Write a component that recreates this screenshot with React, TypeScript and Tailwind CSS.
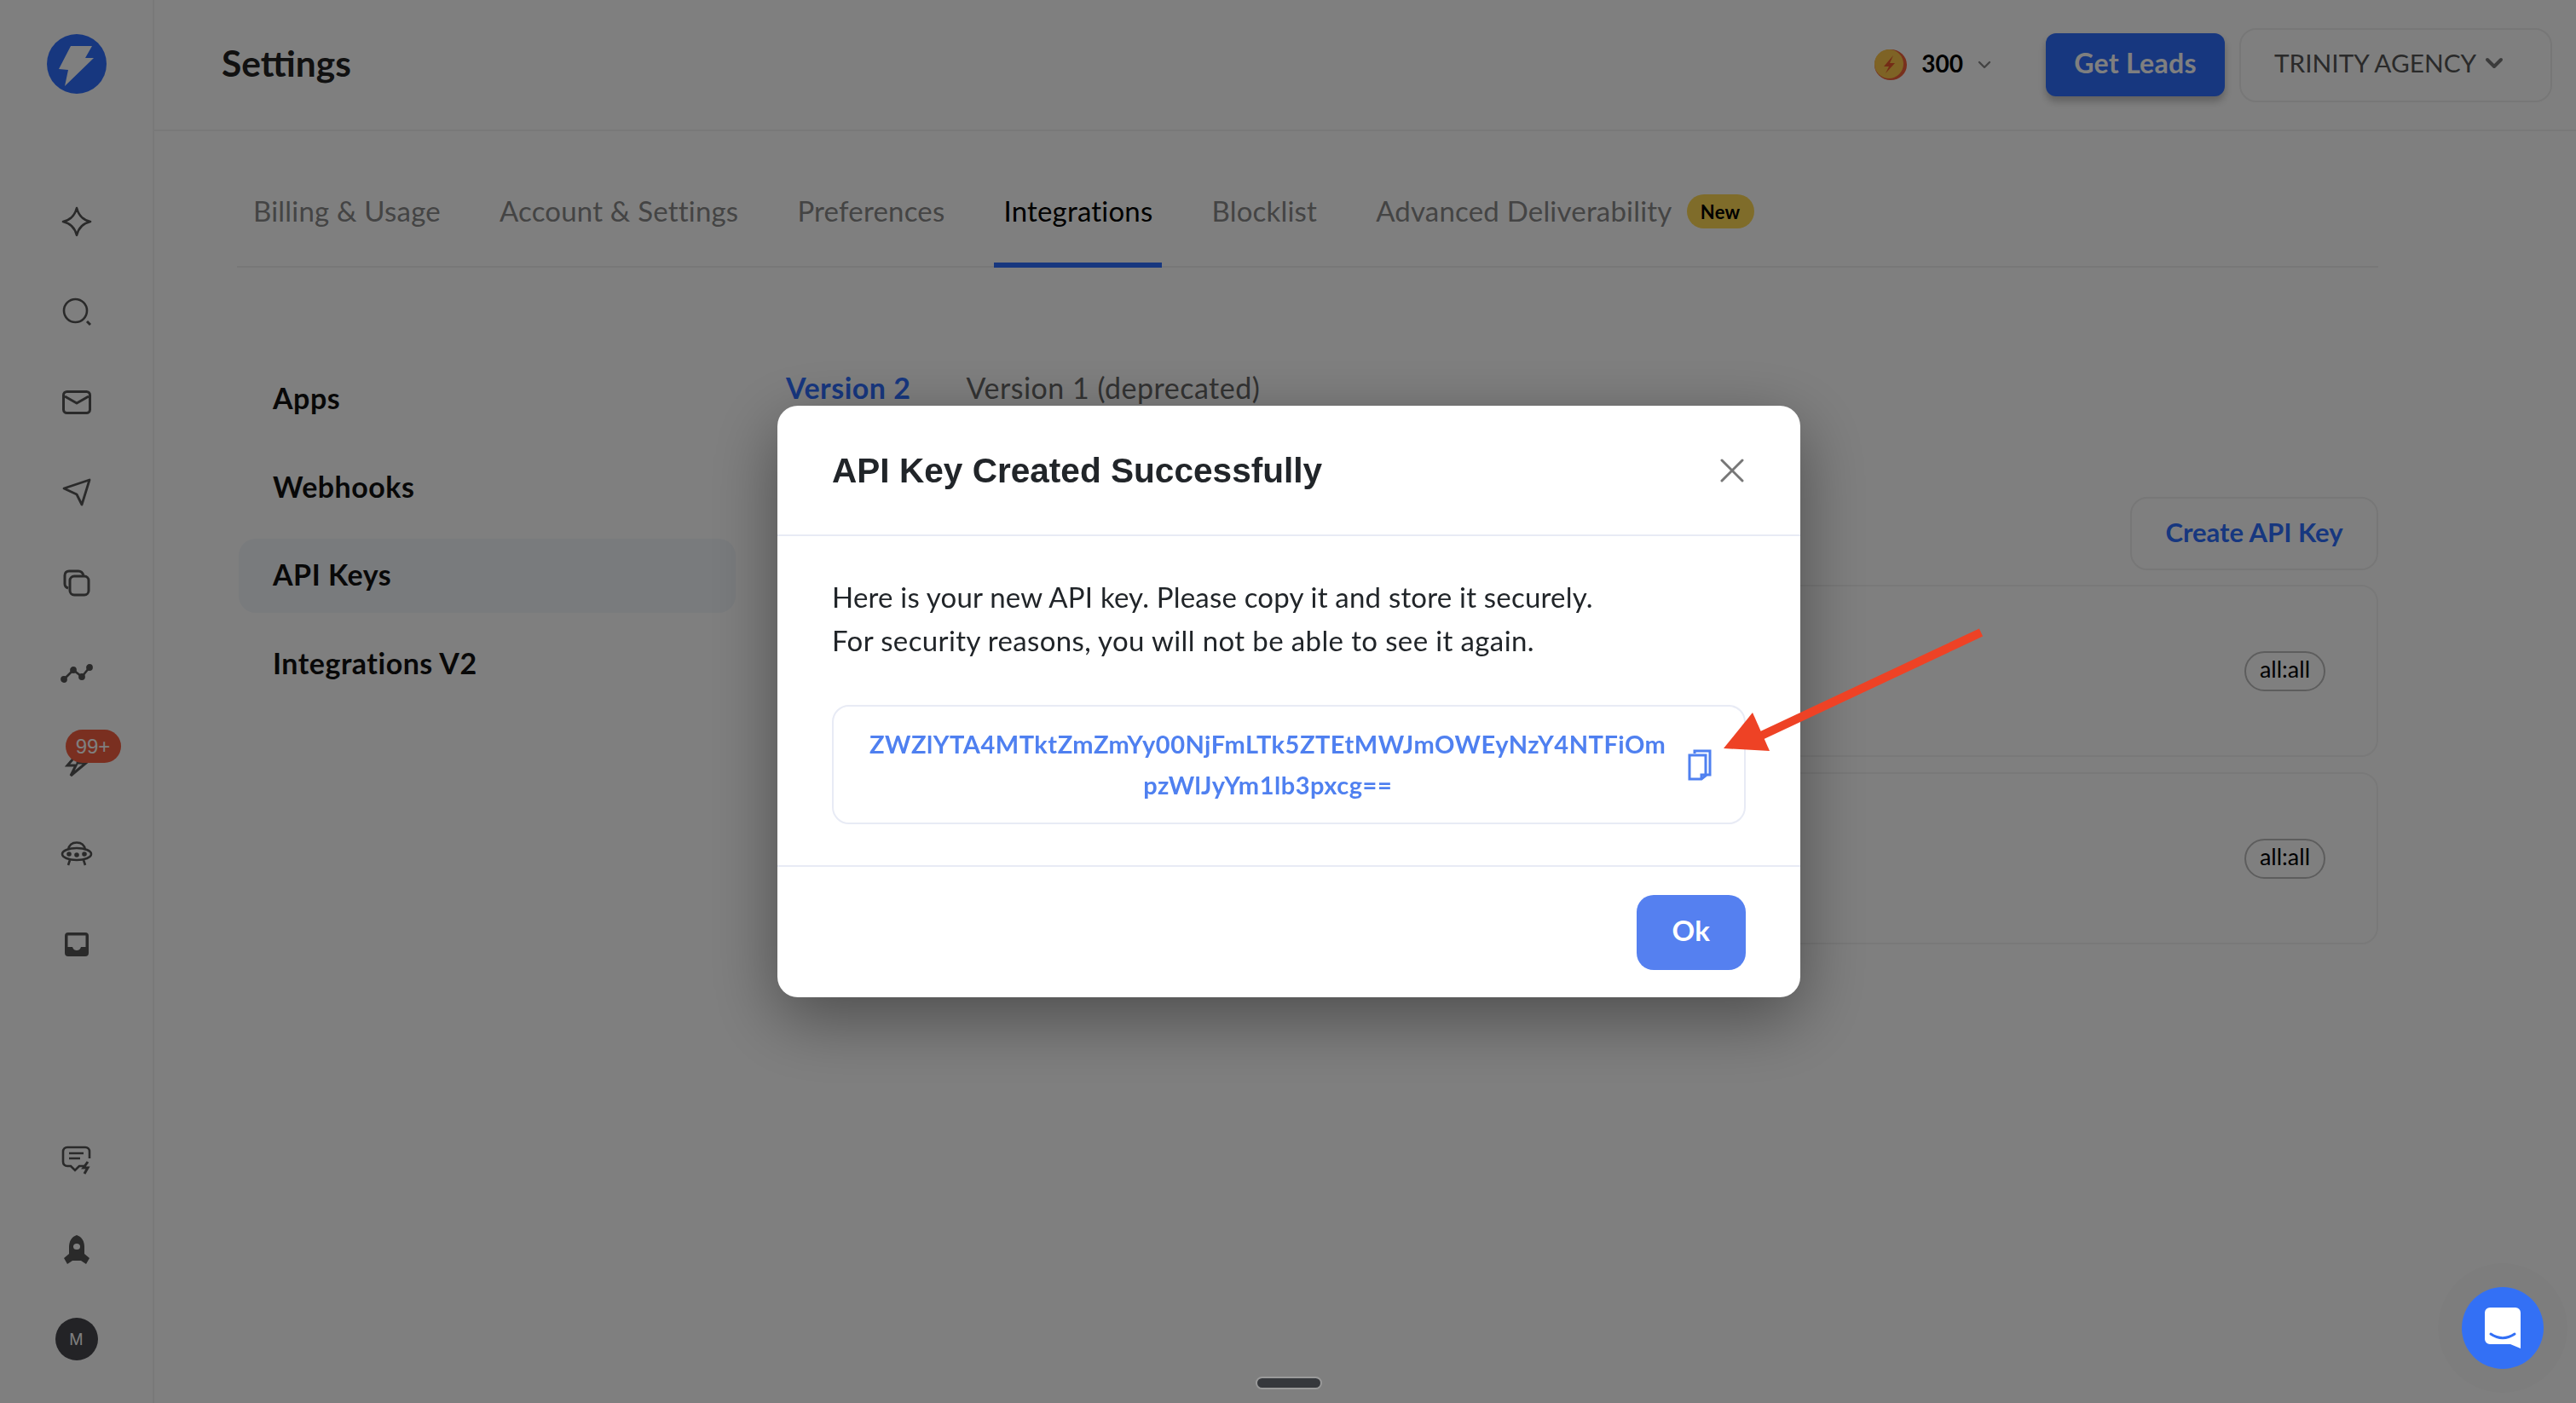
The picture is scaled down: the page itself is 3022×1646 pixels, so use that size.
import { X, ChevronDown } from 'lucide-react';

const tabs = ['Billing & Usage', 'Account & Settings', 'Preferences', 'Integrations', 'Blocklist', 'Advanced Deliverability'];
const menu = ['Apps', 'Webhooks', 'API Keys', 'Integrations V2'];

function Sidebar() {
  return (
    <aside className="w-[181px] shrink-0 h-full border-r-2 border-[#f2f2f2] flex flex-col items-center text-[#555]">
      <svg className="mt-[40px] w-[70px] h-[70px]" viewBox="0 0 70 70">
        <circle cx="35" cy="35" r="35" fill="#2e6eff" />
        <path d="M28 14 L53 14 L45 28 L55 28 L21 61 L25 42 L14 41 Z" fill="#fff" />
      </svg>
      <nav className="mt-[125px] flex flex-col items-center gap-[56px]">
        <span className="h-[50px] flex items-center justify-center">
          <svg width="36" height="36" viewBox="0 0 36 36" fill="none" stroke="currentColor" strokeWidth="2.6" strokeLinejoin="round">
            <path d="M18 2 C20 10 25 16 34 18 C25 20 20 26 18 34 C16 26 11 20 2 18 C11 16 16 10 18 2 Z" />
          </svg>
        </span>
        <span className="h-[50px] flex items-center justify-center">
          <svg width="34" height="34" viewBox="0 0 34 34" fill="none" stroke="currentColor" strokeWidth="2.6">
            <circle cx="15.5" cy="15.5" r="13.5" />
            <path d="M29 28 L33 32" strokeWidth="3" />
          </svg>
        </span>
        <span className="h-[50px] flex items-center justify-center">
          <svg width="34" height="28" viewBox="0 0 34 28" fill="none" stroke="currentColor" strokeWidth="3" strokeLinejoin="round">
            <rect x="1.5" y="1.5" width="31" height="25" rx="4" />
            <path d="M3 7 L17 15 L31 7" />
          </svg>
        </span>
        <span className="h-[50px] flex items-center justify-center">
          <svg width="34" height="34" viewBox="0 0 34 34" fill="none" stroke="currentColor" strokeWidth="2.8" strokeLinejoin="round">
            <path d="M2 12 L32 2 L23 31 L17 19 Z" />
          </svg>
        </span>
        <span className="h-[50px] flex items-center justify-center">
          <svg width="32" height="32" viewBox="0 0 32 32" fill="none" stroke="currentColor" strokeWidth="3" strokeLinejoin="round">
            <path d="M6 22 C3 21 2 19 2 17 L2 7 C2 4 4 2 7 2 L18 2 C21 2 23 4 24 7" />
            <rect x="8" y="8" width="22" height="22" rx="5" />
          </svg>
        </span>
        <span className="h-[50px] flex items-center justify-center">
          <svg width="38" height="22" viewBox="0 0 38 22" fill="none" stroke="currentColor" strokeWidth="2.6">
            <path d="M4 18 L15 7 L25 15 L34 4" />
            <circle cx="4" cy="18" r="2.6" fill="currentColor" />
            <circle cx="15" cy="7" r="2.6" fill="currentColor" />
            <circle cx="25" cy="15" r="2.6" fill="currentColor" />
            <circle cx="34" cy="4" r="2.6" fill="currentColor" />
          </svg>
        </span>
        <span className="relative h-[50px] w-[50px] flex items-center justify-center">
          <svg width="28" height="32" viewBox="0 0 28 32" fill="none" stroke="currentColor" strokeWidth="3" strokeLinejoin="miter">
            <path d="M17 2 L3 18 L13 18 L7 30 L25 15 L15 15 Z" />
          </svg>
          <span className="absolute left-[12px] top-[-15px] w-[65px] h-[39px] rounded-full bg-[#f45e40] text-white text-[24px] font-['Liberation_Sans',sans-serif] flex items-center justify-center">
            99+
          </span>
        </span>
        <span className="h-[50px] flex items-center justify-center">
          <svg width="38" height="30" viewBox="0 0 38 30" fill="none" stroke="currentColor" strokeWidth="2.6">
            <ellipse cx="19" cy="15" rx="17" ry="7" />
            <path d="M9 10 C10 4 14 1.5 19 1.5 C24 1.5 28 4 29 10" />
            <path d="M11 22 L9 28 M27 22 L29 28" />
            <circle cx="10" cy="15" r="1.5" fill="currentColor" />
            <circle cx="19" cy="16" r="1.5" fill="currentColor" />
            <circle cx="28" cy="15" r="1.5" fill="currentColor" />
          </svg>
        </span>
        <span className="h-[50px] flex items-center justify-center">
          <svg width="28" height="28" viewBox="0 0 28 28">
            <path fillRule="evenodd" fill="currentColor" d="M4 0 H24 A4 4 0 0 1 28 4 V24 A4 4 0 0 1 24 28 H4 A4 4 0 0 1 0 24 V4 A4 4 0 0 1 4 0 Z M3.5 3.5 V17 H9 C10 20 12 21 14 21 C16 21 18 20 19 17 H24.5 V3.5 Z" />
          </svg>
        </span>
      </nav>
      <div className="mt-auto pb-[50px] flex flex-col items-center gap-[55px]">
        <span className="h-[50px] flex items-center justify-center">
          <svg width="36" height="34" viewBox="0 0 36 34" fill="none" stroke="currentColor" strokeWidth="2.6">
            <path d="M28 24 L21 24 L16 29 L11 24 L7 24 C4 24 2 22 2 19 L2 7 C2 4 4 2 7 2 L28 2 C31 2 33 4 33 7 L33 15" />
            <path d="M9 9 H26 M9 15 H22" />
            <path d="M31 19 L26 26 H31 L27 33" strokeWidth="3" />
          </svg>
        </span>
        <span className="h-[50px] flex items-center justify-center">
          <svg width="30" height="34" viewBox="0 0 30 34">
            <path fillRule="evenodd" fill="currentColor" d="M15 0 C21 2 24 7 24 14 L24 22 L30 27 L26 34 L20 30 H10 L4 34 L0 27 L6 22 L6 14 C6 7 9 2 15 0 Z M15 10 A4 3.5 0 1 0 15 17 A4 3.5 0 1 0 15 10 Z" />
          </svg>
        </span>
        <span className="w-[50px] h-[50px] rounded-full bg-[#46464c] text-white text-[18px] font-['Inter',sans-serif] flex items-center justify-center">
          M
        </span>
      </div>
    </aside>
  );
}

function KeyCard() {
  return (
    <div className="h-[202px] rounded-[20px] border-2 border-[#f2f2f2] flex items-center justify-end pr-[60px]">
      <span className="h-[47px] w-[95px] pb-[3px] rounded-full border-2 border-[#bbb] flex items-center justify-center text-[27px] text-black">
        all:all
      </span>
    </div>
  );
}

function Modal() {
  return (
    <div className="w-[1200px] h-[694px] bg-white rounded-[24px] shadow-[0_24px_80px_rgba(0,0,0,0.4)] flex flex-col">
      <div className="h-[153px] shrink-0 px-[64px] flex items-center justify-between border-b-2 border-[#e8ebf5]">
        <h2 className="pt-[2px] font-['Liberation_Sans',sans-serif] font-bold text-[40.6px] text-[#212529]">API Key Created Successfully</h2>
        <X size={48} strokeWidth={1.5} className="text-[#777] mr-[-8px]" />
      </div>
      <div className="h-[388px] shrink-0 px-[64px] pt-[46px] border-b-2 border-[#e8ebf5]">
        <p className="text-[33px] tracking-[0.2px] leading-[51px] text-[#212529]">
          Here is your new API key. Please copy it and store it securely.
          <br />
          <span className="tracking-[0.37px]">For security reasons, you will not be able to see it again.</span>
        </p>
        <div className="mt-[50px] h-[140px] rounded-[20px] border-2 border-[#e8ebf5] flex items-center pl-[42px] pr-[39px]">
          <div className="flex-1 text-center text-[29px] tracking-[0.5px] leading-[48px] font-bold text-[#4f80f0]">
            ZWZlYTA4MTktZmZmYy00NjFmLTk5ZTEtMWJmOWEyNzY4NTFiOm
            <br />
            pzWlJyYm1lb3pxcg==
          </div>
          <svg className="ml-[26px] shrink-0" width="28" height="37" viewBox="0 0 28 37" fill="none" stroke="#4f80f0" strokeWidth="3">
            <path d="M8 5 V2 H26 V30 H21" />
            <path d="M2 7 H21 V31 L16 35 H2 Z" />
            <path d="M16 35 V30 H21" />
          </svg>
        </div>
      </div>
      <div className="flex-1 flex items-center justify-end px-[64px]">
        <button className="w-[128px] h-[88px] pb-[3px] rounded-[20px] bg-[#5580f0] text-white text-[33px] tracking-[0.5px] font-bold">Ok</button>
      </div>
    </div>
  );
}

export default function App() {
  return (
    <div className="relative h-screen w-full overflow-hidden bg-white flex font-['Lato',sans-serif] text-[#111]">
      <Sidebar />
      <main className="flex-1 min-w-0 flex flex-col">
        <header className="h-[154px] shrink-0 pl-[79px] pr-[28px] flex items-center border-b-2 border-[#f2f2f2]">
          <h1 className="pb-[5px] text-[42.5px] font-bold text-[#222]">Settings</h1>
          <div className="ml-auto flex items-center">
            <svg width="38" height="36" viewBox="0 0 38 36">
              <ellipse cx="19" cy="18" rx="19" ry="18" fill="#f0603a" />
              <ellipse cx="17" cy="17" rx="17" ry="17" fill="#fcc64a" />
              <path d="M22 7 L11 20 H17 L13 28 L24 16 H18 Z" fill="#e8582c" />
            </svg>
            <span className="ml-[17px] pb-[4px] text-[28px] font-bold text-black">300</span>
            <ChevronDown size={24} strokeWidth={2.4} className="ml-[13px] text-[#888]" />
            <button className="ml-[60px] w-[210px] h-[74px] pb-[4px] rounded-[12px] bg-[#2e6eff] text-white text-[32px] tracking-[0.3px] font-bold shadow-[0_6px_10px_rgba(0,0,0,0.25)]">
              Get Leads
            </button>
            <button className="ml-[17px] w-[367px] h-[87px] pb-[4px] pl-[39px] rounded-[20px] border-2 border-[#eee] flex items-center gap-[5px] text-[29.8px] text-[#555]">
              TRINITY AGENCY
              <ChevronDown size={32} strokeWidth={3} className="text-[#777]" />
            </button>
          </div>
        </header>

        <div className="h-[160px] shrink-0 ml-[97px] mr-[232px] pl-[8px] flex items-stretch gap-[47px] border-b-2 border-[#eee] text-[33px] tracking-[0.2px] text-[#888]">
          {tabs.map((t) => (
            <div
              key={t}
              className={
                t === 'Integrations'
                  ? 'px-[11px] pt-[34px] -mb-[2px] flex items-center border-b-[6px] border-[#2e6eff] text-black'
                  : 'px-[11px] pt-[30px] flex items-center'
              }
            >
              {t}
              {t === 'Advanced Deliverability' && (
                <span className="ml-[17px] h-[40px] w-[79px] rounded-full bg-[#ffd854] text-black text-[22px] font-bold flex items-center justify-center">
                  New
                </span>
              )}
            </div>
          ))}
        </div>

        <div className="flex-1 ml-[99px] mr-[232px] flex">
          <ul className="w-[583px] pt-[109px] flex flex-col gap-[16.5px] shrink-0 text-[34px] tracking-[0.5px] font-bold">
            {menu.map((m) => (
              <li
                key={m}
                className={
                  m === 'API Keys'
                    ? 'h-[87px] mt-[2px] -mb-[2px] pb-[4px] pl-[40px] rounded-[20px] bg-[#f3f6fb] flex items-center'
                    : 'h-[87px] pl-[40px] flex items-center'
                }
              >
                {m}
              </li>
            ))}
          </ul>
          <div className="flex-1 min-w-0 ml-[59px]">
            <div className="pt-[118px] flex gap-[65px] text-[34px] tracking-[0.5px] leading-[46px]">
              <span className="font-bold text-[#2e6eff]">Version 2</span>
              <span className="text-[#666]">Version 1 (deprecated)</span>
            </div>
            <div className="mt-[105px] flex justify-end">
              <button className="w-[291px] h-[86px] pb-[3px] rounded-[20px] border-2 border-[#eee] text-[31px] font-bold text-[#2e6eff]">
                Create API Key
              </button>
            </div>
            <div className="mt-[17px] flex flex-col gap-[18px]">
              <KeyCard />
              <KeyCard />
            </div>
          </div>
        </div>
      </main>

      {/* dim layer and dialog */}
      <div className="fixed inset-0 pl-[2px] bg-black/50 flex items-center justify-center">
        <Modal />
      </div>

      {/* red annotation arrow */}
      <svg className="fixed left-[2015px] top-[730px]" width="320" height="160" viewBox="0 0 320 160">
        <path d="M309 12 L47 135" stroke="#ee4225" strokeWidth="10" />
        <path d="M41 106 L7 148 L61 151 Z" fill="#ee4225" />
      </svg>

      <div className="fixed left-[1473px] top-[1615px] w-[78px] h-[15px] rounded-full bg-[#36383c] border-2 border-[#9a9a9a]" />

      <div className="fixed left-[2888px] top-[1510px] w-[96px] h-[96px] rounded-full bg-[#3370f5] shadow-[0_0_0_28px_rgba(0,0,0,0.02)] flex items-center justify-center">
        <svg width="42" height="48" viewBox="0 0 42 48">
          <path d="M6 0 H36 A6 6 0 0 1 42 6 V48 L30 43 H6 A6 6 0 0 1 0 37 V6 A6 6 0 0 1 6 0 Z" fill="#fff" />
          <path d="M7 31 C16 37 26 37 35 31" stroke="#3370f5" strokeWidth="3" strokeLinecap="round" fill="none" />
        </svg>
      </div>
    </div>
  );
}
